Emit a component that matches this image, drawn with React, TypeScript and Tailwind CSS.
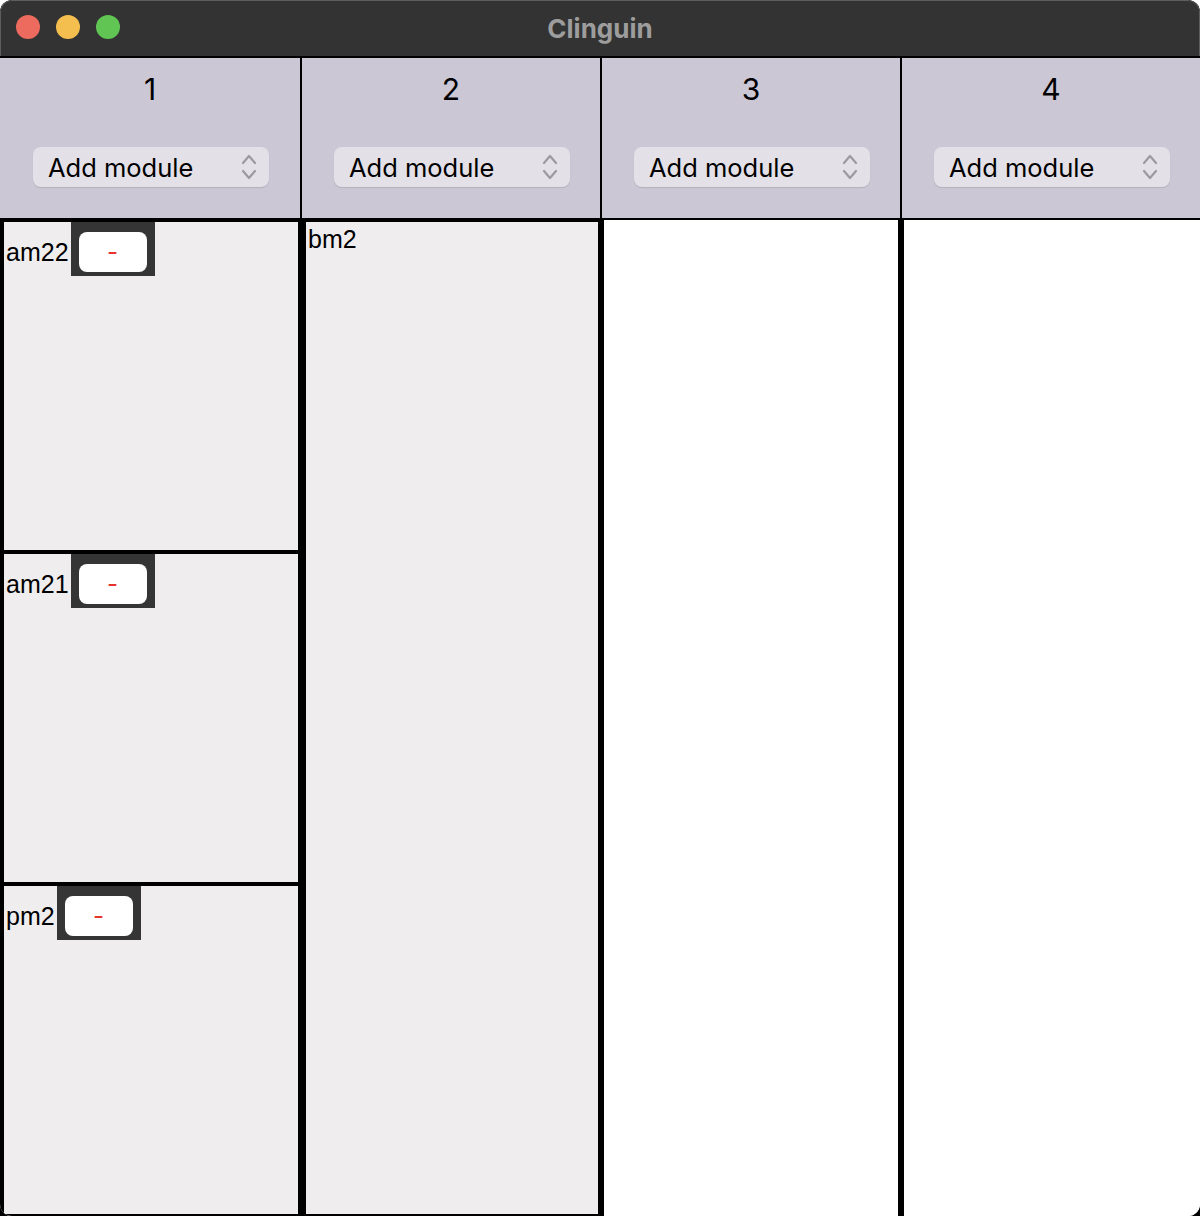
import React from "react";

const sans = { fontFamily: "Inter, 'Noto Sans', sans-serif" };
const helv = { fontFamily: "'Liberation Sans', Arial, sans-serif" };

function Chevrons() {
  return (
    <svg width="16" height="30" viewBox="0 0 16 30" fill="none" stroke="#9c9aa0" strokeWidth="2.2" strokeLinecap="round" strokeLinejoin="round">
      <path d="M2 11 L8 4 L14 11" />
      <path d="M2 19 L8 26 L14 19" />
    </svg>
  );
}

function HeaderCell({ n, first }: { n: number; first?: boolean }) {
  return (
    <div className={`flex flex-col items-center pt-[13px] ${first ? "w-[300px]" : n === 4 ? "flex-1 border-l-2 border-black" : "w-[300px] border-l-2 border-black"}`}>
      <div className="text-[30px] leading-[36px] text-black" style={sans}>{n}</div>
      <div className="mt-[40px] ml-[2px] flex h-[40px] w-[236px] items-center justify-between rounded-[8px] bg-[#e3e0e8] pl-[15px] pr-[12px] shadow-[0_1px_1px_rgba(0,0,0,0.12)]">
        <span className="pt-[2px] text-[25.5px] leading-none text-black" style={sans}>Add module</span>
        <Chevrons />
      </div>
    </div>
  );
}

function Module({ name, removable }: { name: string; removable?: boolean }) {
  return (
    <div className="flex-1 border-y-2 border-black bg-[#efedee]">
      {removable ? (
        <div className="flex items-center">
          <span className="pl-[2px] pt-[5px] text-[25px] leading-[28px] text-black" style={helv}>{name}</span>
          <div className="ml-[2px] bg-[#353535] px-2 pt-[10px] pb-[4px]">
            <div className="flex h-[40px] w-[68px] items-center justify-center rounded-[8px] bg-white">
              <span className="text-[24px] leading-none text-[#e5352b]" style={sans}>-</span>
            </div>
          </div>
        </div>
      ) : (
        <div className="pl-[2px] pt-[3px] text-[25px] leading-[28px] text-black" style={helv}>{name}</div>
      )}
    </div>
  );
}

export default function App() {
  return (
    <div className="h-[1216px] w-[1200px] bg-white">
      <div className="flex h-full flex-col overflow-hidden rounded-t-[12px] bg-black">
        <div className="relative flex h-[56px] items-center justify-center rounded-t-[12px] border-x border-t border-[#5e5e5e] bg-[#333333]">
          <div className="absolute left-[15px] top-[14px] flex gap-[16px]">
            <span className="h-[24px] w-[24px] rounded-full bg-[#ed6a5e]" />
            <span className="h-[24px] w-[24px] rounded-full bg-[#f5bf4f]" />
            <span className="h-[24px] w-[24px] rounded-full bg-[#61c554]" />
          </div>
          <span className="text-[26px] font-bold text-[#9d9d9d]" style={sans}>Clinguin</span>
        </div>
        <div className="mt-[2px] flex h-[160px] bg-[#ccc7d5]">
          <HeaderCell n={1} first />
          <HeaderCell n={2} />
          <HeaderCell n={3} />
          <HeaderCell n={4} />
        </div>
        <div className="mt-[2px] flex flex-1 overflow-hidden rounded-b-[12px] bg-white">
          <div className="flex w-[302px] flex-col border-x-4 border-black">
            <Module name="am22" removable />
            <Module name="am21" removable />
            <Module name="pm2" removable />
          </div>
          <div className="flex w-[300px] flex-col border-l-4 border-r-4 border-black">
            <Module name="bm2" />
          </div>
          <div className="w-[299px] border-l-2 border-r-[3px] border-black bg-white" />
          <div className="flex-1 border-l-[3px] border-black bg-white" />
        </div>
      </div>
    </div>
  );
}
